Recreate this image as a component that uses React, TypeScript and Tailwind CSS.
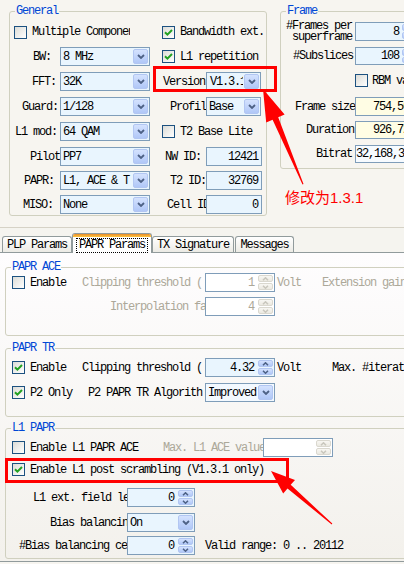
import React from "react";

function Check({ on }: { on?: boolean }) {
  return (
    <span className="flex h-[13px] w-[13px] shrink-0 items-center justify-center border border-[#1c5180] bg-gradient-to-br from-[#dcdcd7] to-white">
      {on && (
        <svg width="9" height="9" viewBox="0 0 9 9">
          <path d="M1 4.3 3.4 6.7 8 2" stroke="#21a121" strokeWidth="2" fill="none" />
        </svg>
      )}
    </span>
  );
}

function DropBtn() {
  return (
    <span className="m-[1px] flex h-[15px] w-[15px] shrink-0 items-center justify-center rounded-[2px] border border-[#b2c6f2] bg-gradient-to-b from-[#d4e2fe] to-[#b0c7f7]">
      <svg width="8" height="5" viewBox="0 0 8 5">
        <path d="M1 1 4 4 7 1" stroke="#4d6185" strokeWidth="1.8" fill="none" />
      </svg>
    </span>
  );
}

function SpinBtn({ off }: { off?: boolean }) {
  const box = off
    ? "border-[#dad8cf] from-[#f8f7f3] to-[#ebe9e1]"
    : "border-[#b2c6f2] from-[#d4e2fe] to-[#b0c7f7]";
  const s = off ? "#c9c7bd" : "#4d6185";
  return (
    <span className="m-[1px] flex w-[15px] shrink-0 flex-col gap-[1px]">
      <span className={`flex h-[7px] items-center justify-center rounded-[2px] border bg-gradient-to-b ${box}`}>
        <svg width="7" height="4" viewBox="0 0 7 4">
          <path d="M1 3.3 3.5 0.8 6 3.3" stroke={s} strokeWidth="1.5" fill="none" />
        </svg>
      </span>
      <span className={`flex h-[7px] items-center justify-center rounded-[2px] border bg-gradient-to-b ${box}`}>
        <svg width="7" height="4" viewBox="0 0 7 4">
          <path d="M1 0.7 3.5 3.2 6 0.7" stroke={s} strokeWidth="1.5" fill="none" />
        </svg>
      </span>
    </span>
  );
}

function Group({ title, className, tbg, children }: { title: string; className: string; tbg: string; children?: React.ReactNode }) {
  return (
    <div className={`relative shrink-0 rounded-[3px] border border-[#d0d0bf] ${className}`}>
      <span className={`absolute -top-[8px] left-[5px] px-[1px] leading-[14px] text-[#0046d5] ${tbg}`}>{title}</span>
      {children}
    </div>
  );
}

// label clipped by the control on its right
function Lbl({ className, children }: { className: string; children: React.ReactNode }) {
  return <span className={`shrink-0 overflow-hidden whitespace-nowrap ${className}`}>{children}</span>;
}

function Combo({ className, children }: { className: string; children: React.ReactNode }) {
  return (
    <span className={`flex h-[19px] shrink-0 items-center border border-[#7f9db9] ${className}`}>
      <span className="flex-1 overflow-hidden whitespace-nowrap pl-[2px]">{children}</span>
      <DropBtn />
    </span>
  );
}

function Edit({ className, children }: { className: string; children: React.ReactNode }) {
  return (
    <span className={`flex h-[19px] shrink-0 items-center justify-end overflow-hidden whitespace-nowrap border border-[#7f9db9] pr-[3px] ${className}`}>
      {children}
    </span>
  );
}

function Spin({ className, off, children }: { className: string; off?: boolean; children?: React.ReactNode }) {
  return (
    <span className={`flex h-[19px] shrink-0 items-stretch border border-[#7f9db9] ${className}`}>
      <span className={`flex flex-1 items-center justify-end pr-[3px] ${off ? "text-[#aca899]" : ""}`}>{children}</span>
      <SpinBtn off={off} />
    </span>
  );
}

const leftRows = [
  { lbl: "BW:", pl: "pl-[23px]", val: "8 MHz" },
  { lbl: "FFT:", pl: "pl-[22px]", val: "32K" },
  { lbl: "Guard:", pl: "pl-[12px]", val: "1/128" },
  { lbl: "L1 mod:", pl: "pl-[5px]", val: "64 QAM" },
  { lbl: "Pilot", pl: "pl-[20px]", val: "PP7" },
  { lbl: "PAPR:", pl: "pl-[14px]", val: "L1, ACE & T" },
  { lbl: "MISO:", pl: "pl-[13px]", val: "None" },
];

const rowGap = ["mt-[9px]", "mt-[6px]", "mt-[6px]", "mt-[6px]", "mt-[6px]", "mt-[5px]", "mt-[5px]"];

function RightCell({ i }: { i: number }) {
  if (i === 0)
    return (
      <span className="flex items-center">
        <Check on />
        <span className="ml-[5px]">L1 repetition</span>
      </span>
    );
  if (i === 1)
    return (
      <span className="flex items-center">
        <Lbl className="w-[44px] pl-[1px]">Version</Lbl>
        <span className="flex h-[19px] w-[55px] shrink-0 items-center border border-[#7f9db9] bg-[#e9f5fe]">
          <span className="flex-1 overflow-hidden whitespace-nowrap pl-[3px]">V1.3.1</span>
          <DropBtn />
        </span>
      </span>
    );
  if (i === 2)
    return (
      <span className="flex items-center">
        <Lbl className="w-[44px] pl-[8px]">Profil</Lbl>
        <Combo className="w-[55px] bg-[#e9f5fe]">Base</Combo>
      </span>
    );
  if (i === 3)
    return (
      <span className="flex items-center">
        <Check />
        <span className="ml-[5px]">T2 Base Lite</span>
      </span>
    );
  const ed = [
    { l: "NW ID:", pl: "pl-[3px]", v: "12421" },
    { l: "T2 ID:", pl: "pl-[8px]", v: "32769" },
    { l: "Cell ID", pl: "pl-[5px]", v: "0" },
  ][i - 4];
  return (
    <span className="flex items-center">
      <Lbl className={`w-[44px] ${ed.pl}`}>{ed.l}</Lbl>
      <Edit className="w-[56px] bg-[#e9f5fe]">{ed.v}</Edit>
    </span>
  );
}

function Tab({ className, children }: { className: string; children: React.ReactNode }) {
  return (
    <span className={`flex h-[16px] items-center justify-center rounded-t-[3px] border border-b-0 border-[#919b9c] bg-gradient-to-b from-white to-[#ecebe5] ${className}`}>
      {children}
    </span>
  );
}

export default function App() {
  return (
    <div className="relative h-[564px] w-[404px] overflow-hidden bg-[#f7f5f0] font-['Liberation_Mono',monospace] text-[12px] leading-[14px] tracking-[-1.2px] text-black">
      {/* upper dialog */}
      <div className="flex h-[227px] items-start">
        <Group title="General" className="ml-[9px] mt-[11px] h-[205px] w-[258px]" tbg="bg-[#f7f5f0]">
          <div className="pt-[13px]">
            <div className="grid h-[13px] grid-cols-[152px_1fr] items-center">
              <span className="flex items-center pl-[4px]">
                <Check />
                <span className="ml-[5px] w-[98px] overflow-hidden whitespace-nowrap">Multiple Componen</span>
              </span>
              <span className="flex items-center">
                <Check on />
                <span className="ml-[5px]">Bandwidth ext.</span>
              </span>
            </div>
            {leftRows.map((r, i) => (
              <div key={r.lbl} className={`grid h-[19px] grid-cols-[152px_1fr] items-center ${rowGap[i]}`}>
                <span className="flex items-center">
                  <Lbl className={`w-[50px] ${r.pl}`}>{r.lbl}</Lbl>
                  <Combo className="w-[90px] bg-[#e9f5fe]">{r.val}</Combo>
                </span>
                <RightCell i={i} />
              </div>
            ))}
          </div>
        </Group>

        <Group title="Frame" className="ml-[13px] mt-[11px] h-[158px] w-[150px]" tbg="bg-[#f7f5f0]">
          <div className="pt-[10px]">
            <div className="flex h-[19px] items-center">
              <span className="w-[74px] shrink-0 pr-[3px] text-right leading-[11px]">
                #Frames per
                <br />
                superframe
              </span>
              <span className="flex h-[19px] w-[70px] border border-[#7f9db9] bg-[#e9f5fe]">
                <span className="flex w-[45px] items-center justify-end pr-[2px]">8</span>
                <SpinBtn />
              </span>
            </div>
            <div className="mt-[6px] flex h-[18px] items-center">
              <span className="w-[74px] shrink-0 pr-[2px] text-right">#Subslices</span>
              <span className="flex h-[18px] w-[70px] border border-[#7f9db9] bg-[#e9f5fe]">
                <span className="flex w-[45px] items-center justify-end pr-[2px]">108</span>
                <SpinBtn />
              </span>
            </div>
            <div className="mt-[9px] flex h-[13px] items-center pl-[74px]">
              <Check />
              <span className="ml-[4px] whitespace-nowrap">RBM valid</span>
            </div>
            <div className="mt-[10px] flex h-[19px] items-center">
              <Lbl className="w-[74px] pl-[14px]">Frame size</Lbl>
              <span className="flex h-[19px] w-[80px] items-center border border-[#7f9db9] bg-[#fffde4] pl-[17px]">754,560</span>
            </div>
            <div className="mt-[5px] flex h-[18px] items-center">
              <Lbl className="w-[74px] pl-[25px]">Duration</Lbl>
              <span className="flex h-[18px] w-[80px] items-center border border-[#7f9db9] bg-[#fffde4] pl-[17px]">926,72</span>
            </div>
            <div className="mt-[6px] flex h-[18px] items-center">
              <Lbl className="w-[74px] pl-[35px]">Bitrat</Lbl>
              <span className="flex h-[18px] w-[80px] items-center border border-[#7f9db9] bg-[#f7fbff]">32,168,35</span>
            </div>
          </div>
        </Group>
      </div>

      {/* tabs */}
      <div className="h-[1px] bg-[#d6d2c6]" />
      <div className="flex h-[25px] items-end border-b border-[#919b9c] bg-[#f5f4ef] pl-[2px]">
        <Tab className="w-[70px]">PLP Params</Tab>
        <span className="relative top-[1px] z-10 flex h-[20px] w-[80px] flex-col rounded-t-[3px] border border-b-0 border-[#919b9c] bg-white">
          <span className="h-[3px] shrink-0 rounded-t-[2px] bg-gradient-to-b from-[#e68b2c] to-[#ffc73c]" />
          <span className="flex flex-1 items-center justify-center">
            <span className="border border-dotted border-black px-[2px] leading-[13px]">PAPR Params</span>
          </span>
        </span>
        <Tab className="w-[82px]">TX Signature</Tab>
        <Tab className="ml-[1px] w-[59px]">Messages</Tab>
      </div>

      {/* tab page */}
      <div className="h-[309px] border-b border-[#919b9c] bg-gradient-to-b from-[#fefdfe] to-[#f3f1ec] pt-[14px]">
        <Group title="PAPR ACE" className="ml-[5px] h-[69px] w-[420px]" tbg="bg-[#fdfbfc]">
          <div className="mt-[5px] flex h-[19px] items-center">
            <span className="flex w-[76px] shrink-0 items-center pl-[6px]">
              <Check />
              <span className="ml-[5px]">Enable</span>
            </span>
            <Lbl className="w-[123px] text-[#aca899]">Clipping threshold (</Lbl>
            <Spin className="w-[70px] bg-white" off>1</Spin>
            <span className="ml-[2px] w-[45px] shrink-0 text-[#aca899]">Volt</span>
            <span className="whitespace-nowrap text-[#aca899]">Extension gain</span>
          </div>
          <div className="mt-[5px] flex h-[19px] items-center">
            <Lbl className="w-[199px] pl-[104px] text-[#aca899]">Interpolation fa</Lbl>
            <Spin className="w-[70px] bg-white" off>4</Spin>
          </div>
        </Group>

        <Group title="PAPR TR" className="ml-[5px] mt-[12px] h-[69px] w-[420px]" tbg="bg-[#faf8f8]">
          <div className="mt-[9px] flex h-[19px] items-center">
            <span className="flex w-[76px] shrink-0 items-center pl-[6px]">
              <Check on />
              <span className="ml-[5px]">Enable</span>
            </span>
            <Lbl className="w-[123px]">Clipping threshold (</Lbl>
            <Spin className="w-[70px] bg-[#e9f5fe]">4.32</Spin>
            <span className="ml-[2px] w-[55px] shrink-0">Volt</span>
            <span className="whitespace-nowrap">Max. #iterations</span>
          </div>
          <div className="mt-[6px] flex h-[19px] items-center">
            <span className="flex w-[76px] shrink-0 items-center pl-[6px]">
              <Check on />
              <span className="ml-[5px]">P2 Only</span>
            </span>
            <Lbl className="w-[123px] pl-[6px]">P2 PAPR TR Algorith</Lbl>
            <Combo className="w-[70px] bg-[#f3f9ff]">Improved</Combo>
          </div>
        </Group>

        <Group title="L1 PAPR" className="ml-[5px] mt-[11px] h-[131px] w-[420px]" tbg="bg-[#f7f6f2]">
          <div className="mt-[9px] flex h-[19px] items-center">
            <span className="flex w-[157px] shrink-0 items-center pl-[6px]">
              <Check />
              <span className="ml-[5px] whitespace-nowrap">Enable L1 PAPR ACE</span>
            </span>
            <Lbl className="w-[100px] text-[#aca899]">Max. L1 ACE value</Lbl>
            <Spin className="w-[70px] bg-white" off />
          </div>
          <div className="mt-[3px] flex h-[19px] items-center pl-[6px]">
            <Check on />
            <span className="ml-[5px] whitespace-nowrap">Enable L1 post scrambling (V1.3.1 only)</span>
          </div>
          <div className="mt-[9px] flex h-[19px] items-center">
            <Lbl className="w-[121px] pl-[27px]">L1 ext. field le</Lbl>
            <Spin className="w-[68px] bg-[#e9f5fe]">0</Spin>
          </div>
          <div className="mt-[6px] flex h-[19px] items-center">
            <Lbl className="w-[121px] pl-[44px]">Bias balancin</Lbl>
            <Combo className="w-[68px] bg-[#e9f5fe]">On</Combo>
          </div>
          <div className="mt-[4px] flex h-[19px] items-center">
            <Lbl className="w-[121px] pl-[13px]">#Bias balancing ce</Lbl>
            <Spin className="w-[68px] bg-[#e9f5fe]">0</Spin>
            <span className="ml-[10px] whitespace-nowrap">Valid range: 0 .. 20112</span>
          </div>
        </Group>
      </div>

      {/* annotations */}
      <span className="absolute left-[153px] top-[66px] h-[26px] w-[124px] border-[3px] border-[#ff0000]" />
      <span className="absolute left-[5px] top-[458px] h-[25px] w-[284px] border-[3px] border-[#ff0000]" />
      <span className="absolute left-[285px] top-[188px] whitespace-nowrap text-[15px] leading-[18px] tracking-normal text-[#ff0000]">
        <span className="font-['Noto_Sans_CJK_SC',sans-serif]">修改为</span>
        <span className="font-['Liberation_Sans',sans-serif]">1.3.1</span>
      </span>
      <svg className="pointer-events-none absolute left-0 top-0" width="404" height="564" viewBox="0 0 404 564">
        <polygon points="263,89 284.6,114.6 278.2,117.3 303.5,184 302.5,184.4 272.6,119.7 266.2,122.4" fill="#ff0000" />
        <polygon points="271,471 295,479.9 290.7,484.8 332.3,523.6 331.7,524.4 287.5,488.6 283.2,493.5" fill="#ff0000" />
      </svg>
    </div>
  );
}
